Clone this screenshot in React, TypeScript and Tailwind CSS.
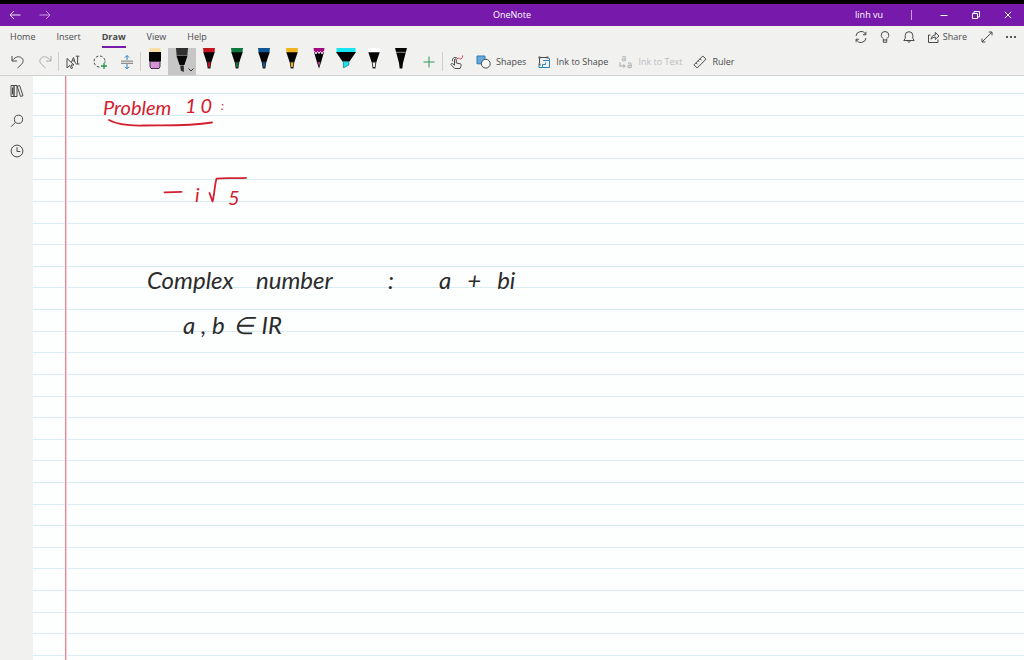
import type { ReactNode } from "react"

const line = {
    viewBox: "0 0 16 16",
    fill: "none",
    stroke: "currentColor",
    strokeWidth: 1,
    className: "size-4 shrink-0",
}

const pens = [
    { name: "Red pen", color: "#c4141f" },
    { name: "Green pen", color: "#0c7a3d" },
    { name: "Blue pen", color: "#0d5796" },
    { name: "Yellow pen", color: "#f0b41e" },
]

const Tool=({ label, children }: { label: string; children: ReactNode })=>{
    return(
        <button aria-label={label} className="flex min-w-[27px] shrink-0 items-center justify-center">{children}</button>
    )
}

const Pen=({ color, tip = color }: { color: string; tip?: string })=>{
    return(
        <svg viewBox="0 0 14 22" className="h-[22px] w-[14px]">
            <path d="M1 0H13L12.4 5H1.6Z" fill={color}/>
            <path d="M1.3 4.2H12.7L9.4 14H4.6Z" fill="#050505"/>
            <path d="M4.6 13.6H9.4L8.4 20.5H5.7Z" fill="#222"/>
            <path d="M5.6 14.4H8.4L7.8 19H6.3Z" fill={tip}/>
        </svg>
    )
}

const TitleBar=()=>{
    return(
        <header className="grid h-[26px] grid-cols-3 items-center border-t-4 border-black bg-[#7719aa] text-white">
            <div className="flex">
                <button aria-label="Back" className="flex w-[30px] justify-center">
                    <svg viewBox="0 0 12 12" className="size-3" fill="none" stroke="#f0e2f7"><path d="M11.5 6H1M5 2L1 6L5 10"/></svg>
                </button>
                <button aria-label="Forward" className="flex w-[30px] justify-center">
                    <svg viewBox="0 0 12 12" className="size-3" fill="none" stroke="#c99fe0"><path d="M.5 6H11M7 2L11 6L7 10"/></svg>
                </button>
            </div>
            <h1 className="text-center">OneNote</h1>
            <div className="flex items-center justify-end">
                <button>linh vu</button>
                <span className="ml-7 h-2.5 w-px bg-[#c99fe0]"/>
                <button aria-label="Minimize" className="ml-4 flex w-8 justify-center">
                    <svg viewBox="0 0 8 8" className="size-2" stroke="white"><path d="M.5 4.5H7.5"/></svg>
                </button>
                <button aria-label="Restore" className="flex w-8 justify-center">
                    <svg viewBox="0 0 8 8" className="size-2" fill="none" stroke="white"><path d="M.5 2.5H5.5V7.5H.5ZM2 2V.5H7.5V6H6"/></svg>
                </button>
                <button aria-label="Close" className="flex w-8 justify-center">
                    <svg viewBox="0 0 8 8" className="size-2" stroke="white"><path d="M.8 .8L7.2 7.2M7.2 .8L.8 7.2"/></svg>
                </button>
            </div>
        </header>
    )
}

const MenuBar=()=>{
    return(
        <div className="flex h-[22px] items-center justify-between pl-2.5">
            <nav className="flex h-full items-center gap-[21px]">
                <button>Home</button>
                <button>Insert</button>
                <button className="h-full border-y-2 border-t-transparent border-b-[#7719aa] font-bold">Draw</button>
                <button>View</button>
                <button>Help</button>
            </nav>
            <div className="flex items-center">
                <button aria-label="Sync" className="flex w-6 justify-center">
                    <svg {...line}><path d="M3 7A5 5 0 0 1 12.6 5.6M13 9A5 5 0 0 1 3.4 10.4M12.9 2.8V5.8H9.9M3.1 13.2V10.2H6.1"/></svg>
                </button>
                <button aria-label="Tell me" className="flex w-6 justify-center">
                    <svg {...line}><path d="M6.3 11V9.8C5.5 9 4.2 8 4.2 6.3A3.8 3.8 0 0 1 11.8 6.3C11.8 8 10.5 9 9.7 9.8V11ZM6.3 11V13.3H9.7V11"/></svg>
                </button>
                <button aria-label="Notifications" className="flex w-6 justify-center">
                    <svg {...line}><path d="M2.8 11.5H13.2L11.8 9.5V6.5A3.8 3.8 0 0 0 4.2 6.5V9.5ZM6.6 11.5C6.8 13.9 9.2 13.9 9.4 11.5"/></svg>
                </button>
                <button className="ml-[5px] flex items-center gap-px">
                    <svg {...line}><path d="M4.5 6H2.5V13.5H12V10.5M5 10.2C5.3 7.5 7.3 6 9.3 6V3.3L13 7L9.3 10.4V8C7.8 8 6.3 8.8 5 10.2Z"/></svg>
                    Share
                </button>
                <button aria-label="Full screen" className="ml-3 flex w-4 justify-center">
                    <svg {...line}><path d="M3 13L13 3M9.6 3H13V6.4M3 9.6V13H6.4"/></svg>
                </button>
                <button aria-label="More" className="mr-[5px] ml-2 flex w-4 justify-center">
                    <svg viewBox="0 0 16 16" className="size-4" fill="#333"><circle cx="4" cy="8" r="1.1"/><circle cx="8" cy="8" r="1.1"/><circle cx="12" cy="8" r="1.1"/></svg>
                </button>
            </div>
        </div>
    )
}

const Toolbar=()=>{
    return(
        <div className="flex h-7 border-b border-[#d0d0d0] pl-1">
            <Tool label="Undo">
                <svg {...line}><path d="M2 2V7H7M2.2 6.8C4.4 3.5 8 1.8 10.7 3.3C13.8 5.1 13.6 8.2 11.8 10L7.5 14"/></svg>
            </Tool>
            <Tool label="Redo">
                <svg {...line} stroke="#aaa"><path d="M14 2V7H9M13.8 6.8C11.6 3.5 8 1.8 5.3 3.3C2.2 5.1 2.4 8.2 4.2 10L8.5 14"/></svg>
            </Tool>
            <span className="my-1 w-px bg-[#cfcfcf]"/>
            <Tool label="Select objects or type text">
                <svg {...line}><path d="M2 4.5V14L4.6 11.5L6.3 14.6L7.6 13.9L6 11H9ZM6.5 8L8.5 3.5L10.5 9.5M7.5 6.8H9.5M10.8 2.2H14.4M12.6 2.2V10M10.8 10H14.4"/></svg>
            </Tool>
            <Tool label="Lasso select">
                <svg {...line}><circle cx="7.5" cy="7.5" r="5.5" strokeDasharray="2.6 1.7"/><path d="M9 9H15V15H9Z" fill="#f1f1f0" stroke="none"/><path d="M12 9V15M9 12H15" stroke="#28934c" strokeWidth="1.3"/></svg>
            </Tool>
            <Tool label="Insert space">
                <svg {...line}><path d="M2 7.1H14M2 9.3H14" stroke="#777"/><path d="M8 1.5V6M6 3.5L8 1.5L10 3.5M8 10V14.8M6 12.8L8 14.8L10 12.8" stroke="#2b82c4"/></svg>
            </Tool>
            <span className="my-1 w-px bg-[#cfcfcf]"/>
            <div className="grid w-[274px] shrink-0 grid-cols-10 items-start">
                <Tool label="Eraser">
                    <svg viewBox="0 0 14 22" className="h-[22px] w-[14px]"><path d="M1.5 0H12.5V4.5H1.5Z" fill="#f8dda4"/><path d="M1 4H13V13.5H1Z" fill="#050505"/><path d="M2 13.5H12V18.5L11 20.5H3L2 18.5Z" fill="#d492d8" stroke="#493049"/></svg>
                </Tool>
                <button aria-label="Black pen" aria-pressed="true" className="relative flex h-[27px] justify-center bg-[#c6c6c6]">
                    <svg viewBox="0 0 14 24" className="h-6 w-[14px]"><path d="M1 0H13L12.4 7H1.6Z" fill="#303030"/><path d="M1.4 7.5H12.6L9.4 17H4.6Z" fill="#050505"/><path d="M5.2 17.5H8.8V24L5.8 22.5Z" fill="#292929"/></svg>
                    <svg viewBox="0 0 6 4" className="absolute right-0.5 bottom-[3px] h-1 w-1.5" fill="none" stroke="#333"><path d="M.5 .5L3 3L5.5 .5"/></svg>
                </button>
                {pens.map((pen)=>(
                    <Tool key={pen.name} label={pen.name}><Pen color={pen.color}/></Tool>
                ))}
                <Tool label="Galaxy pencil">
                    <svg viewBox="0 0 14 22" className="h-[22px] w-[14px]"><path d="M1.5 0H12.5L11.7 5H2.3Z" fill="#a0087f"/><path d="M2 4L4 6.3L5.7 4.5L7 6L8.5 4.5L10 6.3L12 4L9 14.5L7 20.5L5 14.5Z" fill="#050505"/><path d="M2.3 3.3L4 5.3L5.7 3.5L7 5L8.5 3.5L10 5.3L11.7 3.3" fill="none" stroke="#fff" strokeWidth=".9"/><path d="M5.5 14H8.5L7.5 17.5H6.5Z" fill="#a33f91"/></svg>
                </Tool>
                <Tool label="Highlighter">
                    <svg viewBox="0 0 20 22" className="h-[22px] w-5"><path d="M.5 0H19.5V4.5H.5Z" fill="#18e5ef"/><path d="M0 4H20L13.5 13.5H6.5Z" fill="#050505"/><path d="M7.2 13.5H12.8V17L7.5 19.8Z" fill="#18e5ef" stroke="#176b70" strokeWidth=".7"/></svg>
                </Tool>
                <Tool label="White pen"><Pen color="#fff" tip="#eee"/></Tool>
                <Tool label="Fine black pen">
                    <svg viewBox="0 0 14 22" className="h-[22px] w-[14px]"><path d="M1 0H13L9 15L8.3 20.5H5.7L5 15Z" fill="#050505"/><path d="M2 4.3H12" stroke="#aaa" strokeWidth=".8"/></svg>
                </Tool>
            </div>
            <Tool label="Add pen">
                <svg {...line} stroke="#33955a"><path d="M8 2.5V13.5M2.5 8H13.5"/></svg>
            </Tool>
            <span className="my-1 w-px bg-[#cfcfcf]"/>
            <Tool label="Draw with touch">
                <svg {...line}><path d="M5.5 11V5.8C5.5 4.5 7.3 4.5 7.3 5.8V9L11.3 9.8C12.5 10 12.2 11.5 11.8 12.5L11 14.5H5.8L2.2 10.8C1.5 9.7 3 9 3.8 9.8L5.5 11.2M3.7 7.3C2.4 4 6.5 2 8.7 4.7"/><path d="M8 5.2C9.5 2.5 10.7 6 12.5 4.5C13.4 3.7 13.6 2.5 13.6 1.5" stroke="#e0343f"/></svg>
            </Tool>
            <div className="ml-1.5 flex gap-2.5">
                <button className="flex items-center gap-1">
                    <svg {...line}><path d="M1 2H9V6A5 5 0 0 0 5 9.8H1Z" fill="#68a9dd" stroke="#2f7db9"/><circle cx="9.8" cy="9.7" r="4.4" fill="#fafafa"/></svg>
                    Shapes
                </button>
                <button className="flex items-center gap-1">
                    <svg {...line}><path d="M3.5 3.5H11.5M3.5 3.5V9.5"/><path d="M2.5 2.5H4.5V4.5H2.5ZM10.5 2.5H12.5V4.5H10.5ZM2.5 9.5H4.5V11.5H2.5Z" fill="#555" stroke="none"/><path d="M7 6.5H13.5V13.5H6.5V10.5H9.5V8.5M3 11.5V13.5H6.5M12.5 4.5H13.5V6.5" stroke="#2581c2"/></svg>
                    Ink to Shape
                </button>
                <button disabled className="flex items-center gap-1 text-[#bdbdbd]">
                    <svg {...line}><path d="M4.5 3.2C5.3 2 7.5 2 7.5 4V7M7.5 4.6C5 4.3 4 5 4.3 6.1C4.8 7.5 7 7 7.5 5.7M10 9.7C10.8 8.4 13.2 8.6 13.2 10.4V14M13.2 11C10.6 10.9 9.6 11.6 9.9 12.8C10.4 14.4 12.8 13.6 13.2 12.3M2 8.2V12H7M5.4 10.4L7 12L5.4 13.6" strokeWidth="1.3"/></svg>
                    Ink to Text
                </button>
                <button className="flex items-center gap-1">
                    <svg {...line}><path d="M2 10.8L10.8 2L14 5.2L5.2 14ZM4 8.8L5.5 10.3M6 6.8L7 7.8M8 4.8L9.5 6.3"/></svg>
                    Ruler
                </button>
            </div>
        </div>
    )
}

const SideBar=()=>{
    return(
        <aside className="flex w-[33px] shrink-0 flex-col items-center gap-3.5 bg-[#f1f1f0] pt-[7px]">
            <button aria-label="Notebooks">
                <svg {...line}><path d="M2 2.5H5V13.5H2ZM5 2.5H8V13.5H5ZM8.2 3.3L10.6 2.5L14 12.7L11.6 13.5ZM3.5 4.5V11.5"/></svg>
            </button>
            <button aria-label="Search">
                <svg {...line}><circle cx="9.5" cy="6.3" r="4.1"/><path d="M6.6 9.2L2 13.8"/></svg>
            </button>
            <button aria-label="Recent notes">
                <svg {...line}><circle cx="8" cy="8" r="5.9"/><path d="M8 4.3V8.5H11.3"/></svg>
            </button>
        </aside>
    )
}

const Page=()=>{
    return(
        <main className="relative flex flex-1 flex-col overflow-hidden bg-[#fdfffe] pb-1">
            <div className="h-[18px] shrink-0 border-b border-[#d9edf0]"/>
            {Array.from({ length: 26 }, (_, i)=>(
                <div key={i} className="flex-1 border-b border-[#d9edf0]"/>
            ))}
            <div className="absolute inset-y-0 left-8 w-0.5 border-r border-[#f8cdd1] bg-[#e58a94]"/>

            {/* ink is placed freely on the page */}
            <div className="font-[Lato,sans-serif] leading-6 whitespace-nowrap italic">
                <div className="text-xl text-[#d4202e]">
                    <p className="absolute top-[17px] left-[70px]">Problem</p>
                    <p className="absolute top-[15px] left-[152px] flex gap-1"><span>1</span><span>0</span></p>
                    <p className="absolute top-[18px] left-[188px] text-xs leading-6">:</p>
                    <svg viewBox="0 0 108 9" className="absolute top-[43px] left-[75px] h-[9px] w-[108px]" fill="none" stroke="currentColor" strokeWidth="1.8" strokeLinecap="round"><path d="M1 1C8 5 20 7 36 6.5C55 6 78 7.5 104 3.5"/></svg>
                    <svg viewBox="0 0 20 4" className="absolute top-[114px] left-[130px] h-1 w-5" fill="none" stroke="currentColor" strokeWidth="1.8" strokeLinecap="round"><path d="M1.5 2.3L18.5 1.8"/></svg>
                    <p className="absolute top-[104px] left-[162px]">i</p>
                    <svg viewBox="0 0 40 28" className="absolute top-[100px] left-[175px] h-7 w-10" fill="none" stroke="currentColor" strokeWidth="1.8" strokeLinecap="round" strokeLinejoin="round"><path d="M1.5 17L4.5 25.5C6.5 19 6.5 9 8.5 2.7C18 1.2 28 2.8 38 1.8"/></svg>
                    <p className="absolute top-[107px] left-[195px]">5</p>
                </div>
                <div className="text-2xl leading-6 text-[#2b2b2b]">
                    <p className="absolute top-[192px] left-[114px]">Complex</p>
                    <p className="absolute top-[192px] left-[223px]">number</p>
                    <p className="absolute top-[192px] left-[355px]">:</p>
                    <p className="absolute top-[192px] left-[406px] flex gap-4"><span>a</span><span>+</span><span>bi</span></p>
                    <p className="absolute top-[237px] left-[150px] flex gap-2"><span>a , b</span><span>∈</span><span>IR</span></p>
                </div>
            </div>
        </main>
    )
}

const App=()=>{
    return(
        <div className="flex min-h-screen flex-col bg-[#f1f1f0] font-['Open_Sans',sans-serif] text-[9px] leading-3 text-[#4a4a4a]">
            <TitleBar/>
            <MenuBar/>
            <Toolbar/>
            <div className="flex flex-1">
                <SideBar/>
                <Page/>
            </div>
        </div>
    )
}

export default App
